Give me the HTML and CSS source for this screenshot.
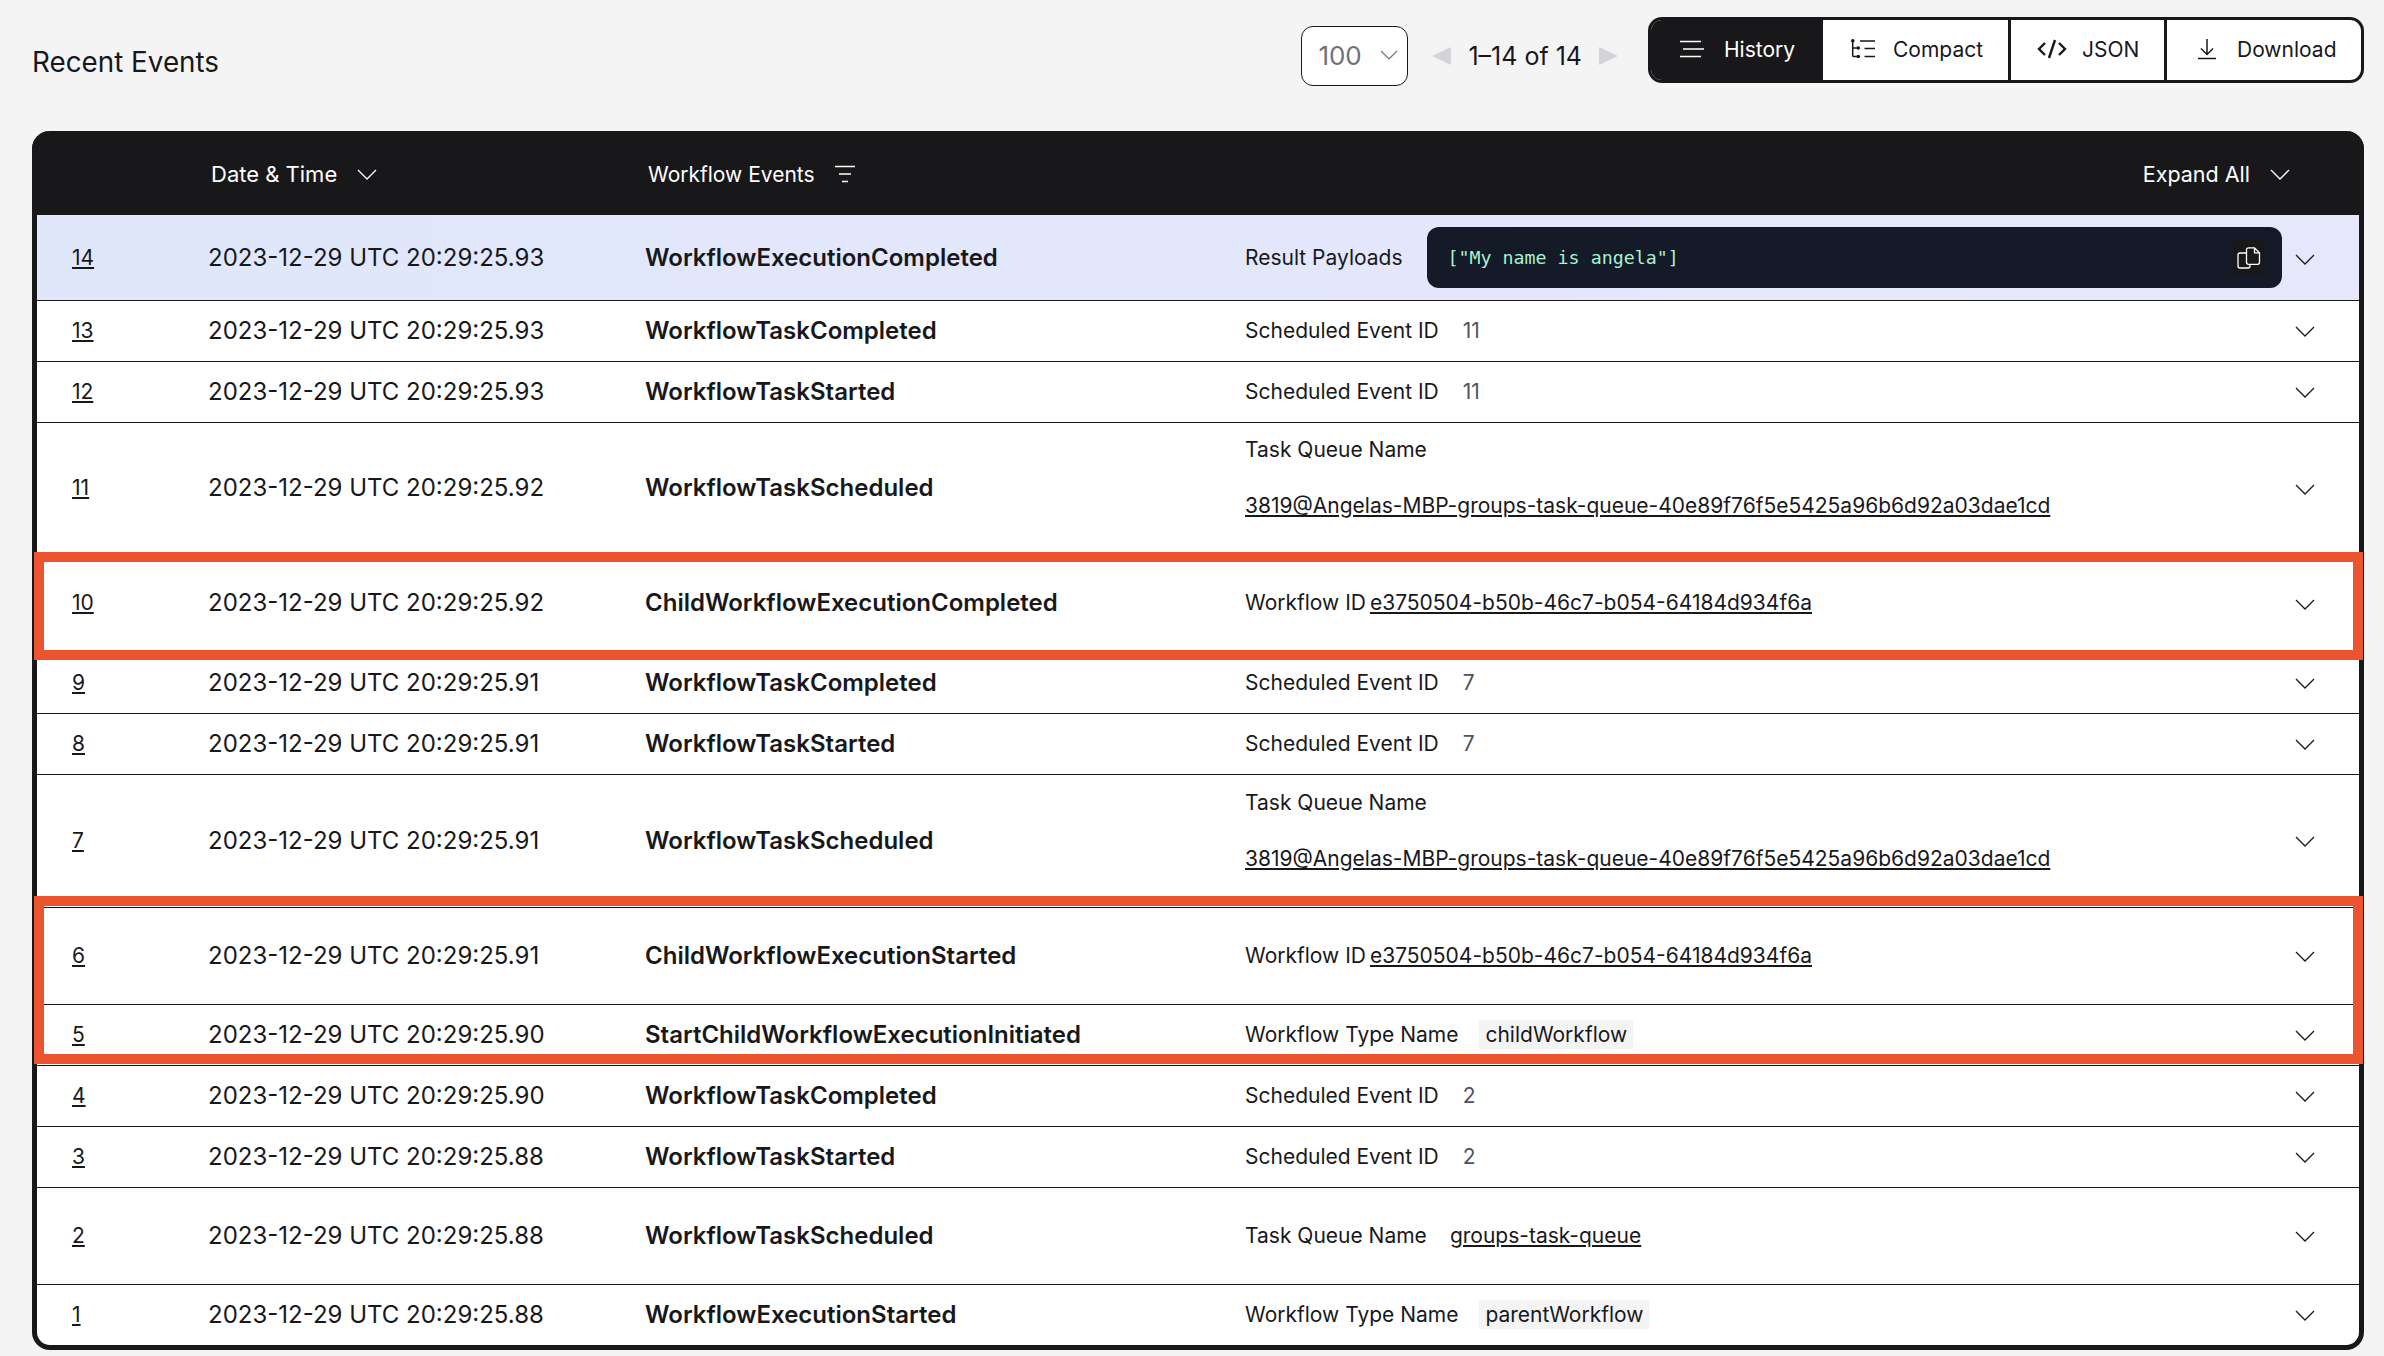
FILE: index.html
```html
<!DOCTYPE html>
<html>
  <head>
    <title>Recent Events</title>
    <link rel="stylesheet" href="styles.css">
  </head>
  <body>
    <div class="top-bar">
      <h2 class="page-title">Recent Events</h2>
      <div class="page-select"><span>100</span><svg width="20" height="12" viewBox="0 0 20 12"><path d="M2 2l8 8 8-8"/></svg></div>
      <div class="pager">
        <span class="arrow arrow-left"></span>
        <span>1–14 of 14</span>
        <span class="arrow arrow-right"></span>
      </div>
      <div class="view-tabs">
        <div class="tab tab-active">
          <svg class="thin" width="24" height="18" viewBox="0 0 24 18"><path d="M0 1.500h21M3 9h21M0 16.500h21"/></svg>
          History
        </div>
        <div class="tab tab-compact">
          <svg width="24" height="20" viewBox="0 0 24 20"><path d="M1.700 1.500v16M1.700 9h5.600M1.700 17.500h5.600M9 2h15M13.500 9.500h10.500M13.500 17.500h10.500"/><circle class="dot" cx="1.800" cy="1.800" r="1.800"/><circle class="dot" cx="7.300" cy="9" r="1.800"/><circle class="dot" cx="7.300" cy="17.500" r="1.800"/></svg>
          Compact
        </div>
        <div class="tab tab-json">
          <svg class="bold" width="30" height="20" viewBox="0 0 30 20"><path d="M8 4l-6 6 6 6M22 4l6 6-6 6M18 1l-6 18"/></svg>
          JSON
        </div>
        <div class="tab tab-download">
          <svg width="18" height="22" viewBox="0 0 18 22"><path d="M9 1v15M3 10.500l6 6 6-6M0 20.500h18"/></svg>
          Download
        </div>
      </div>
    </div>

    <div class="events-table">
      <div class="table-head">
        <div class="head-date">Date &amp; Time <svg class="chevron" width="20" height="12" viewBox="0 0 20 12"><path d="M1 1l9 9 9-9"/></svg></div>
        <div class="head-events">Workflow Events <svg class="thin" width="20" height="18" viewBox="0 0 20 18"><path d="M0 1.500h20M4 9h12M7 16.500h6"/></svg></div>
        <div class="head-expand">Expand All <svg class="chevron" width="20" height="12" viewBox="0 0 20 12"><path d="M1 1l9 9 9-9"/></svg></div>
      </div>

      <div class="row row-result">
        <a class="num">14</a>
        <div class="date">2023-12-29 UTC 20:29:25.93</div>
        <div class="event">WorkflowExecutionCompleted</div>
        <div class="detail">
          <span>Result Payloads</span>
          <div class="payload">
            <code>["My name is angela"]</code>
            <div class="copy-btn">
              <svg class="thin" width="24" height="22" viewBox="0 0 24 22"><path d="M11.500.8h6l5 5v9.500a2 2 0 0 1-2 2h-9a2 2 0 0 1-2-2V2.800a2 2 0 0 1 2-2zM17.500.8v5h5M9.500 6H3a2 2 0 0 0-2 2v11a2 2 0 0 0 2 2h8a2 2 0 0 0 2-2v-2"/></svg>
            </div>
          </div>
        </div>
        <svg class="toggle" width="20" height="12" viewBox="0 0 20 12"><path d="M1 1l9 9 9-9"/></svg>
      </div>

      <div class="row">
        <a class="num">13</a>
        <div class="date">2023-12-29 UTC 20:29:25.93</div>
        <div class="event">WorkflowTaskCompleted</div>
        <div class="detail"><span>Scheduled Event ID</span><span class="value">11</span></div>
        <svg class="toggle" width="20" height="12" viewBox="0 0 20 12"><path d="M1 1l9 9 9-9"/></svg>
      </div>

      <div class="row">
        <a class="num">12</a>
        <div class="date">2023-12-29 UTC 20:29:25.93</div>
        <div class="event">WorkflowTaskStarted</div>
        <div class="detail"><span>Scheduled Event ID</span><span class="value">11</span></div>
        <svg class="toggle" width="20" height="12" viewBox="0 0 20 12"><path d="M1 1l9 9 9-9"/></svg>
      </div>

      <div class="row row-tall">
        <a class="num">11</a>
        <div class="date">2023-12-29 UTC 20:29:25.92</div>
        <div class="event">WorkflowTaskScheduled</div>
        <div class="detail detail-stack"><span>Task Queue Name</span><a class="link">3819@Angelas-MBP-groups-task-queue-40e89f76f5e5425a96b6d92a03dae1cd</a></div>
        <svg class="toggle" width="20" height="12" viewBox="0 0 20 12"><path d="M1 1l9 9 9-9"/></svg>
      </div>

      <div class="marked marked-single">
        <div class="row row-ten">
          <a class="num">10</a>
          <div class="date">2023-12-29 UTC 20:29:25.92</div>
          <div class="event">ChildWorkflowExecutionCompleted</div>
          <div class="detail"><span>Workflow ID</span><a class="link link-near">e3750504-b50b-46c7-b054-64184d934f6a</a></div>
          <svg class="toggle" width="20" height="12" viewBox="0 0 20 12"><path d="M1 1l9 9 9-9"/></svg>
        </div>
      </div>

      <div class="row">
        <a class="num">9</a>
        <div class="date">2023-12-29 UTC 20:29:25.91</div>
        <div class="event">WorkflowTaskCompleted</div>
        <div class="detail"><span>Scheduled Event ID</span><span class="value">7</span></div>
        <svg class="toggle" width="20" height="12" viewBox="0 0 20 12"><path d="M1 1l9 9 9-9"/></svg>
      </div>

      <div class="row">
        <a class="num">8</a>
        <div class="date">2023-12-29 UTC 20:29:25.91</div>
        <div class="event">WorkflowTaskStarted</div>
        <div class="detail"><span>Scheduled Event ID</span><span class="value">7</span></div>
        <svg class="toggle" width="20" height="12" viewBox="0 0 20 12"><path d="M1 1l9 9 9-9"/></svg>
      </div>

      <div class="row row-seven">
        <a class="num">7</a>
        <div class="date">2023-12-29 UTC 20:29:25.91</div>
        <div class="event">WorkflowTaskScheduled</div>
        <div class="detail detail-stack"><span>Task Queue Name</span><a class="link">3819@Angelas-MBP-groups-task-queue-40e89f76f5e5425a96b6d92a03dae1cd</a></div>
        <svg class="toggle" width="20" height="12" viewBox="0 0 20 12"><path d="M1 1l9 9 9-9"/></svg>
      </div>

      <div class="marked marked-double">
        <div class="row row-mid">
          <a class="num">6</a>
          <div class="date">2023-12-29 UTC 20:29:25.91</div>
          <div class="event">ChildWorkflowExecutionStarted</div>
          <div class="detail"><span>Workflow ID</span><a class="link link-near">e3750504-b50b-46c7-b054-64184d934f6a</a></div>
          <svg class="toggle" width="20" height="12" viewBox="0 0 20 12"><path d="M1 1l9 9 9-9"/></svg>
        </div>
        <div class="row">
          <a class="num">5</a>
          <div class="date">2023-12-29 UTC 20:29:25.90</div>
          <div class="event">StartChildWorkflowExecutionInitiated</div>
          <div class="detail"><span>Workflow Type Name</span><span class="chip">childWorkflow</span></div>
          <svg class="toggle" width="20" height="12" viewBox="0 0 20 12"><path d="M1 1l9 9 9-9"/></svg>
        </div>
      </div>

      <div class="row">
        <a class="num">4</a>
        <div class="date">2023-12-29 UTC 20:29:25.90</div>
        <div class="event">WorkflowTaskCompleted</div>
        <div class="detail"><span>Scheduled Event ID</span><span class="value">2</span></div>
        <svg class="toggle" width="20" height="12" viewBox="0 0 20 12"><path d="M1 1l9 9 9-9"/></svg>
      </div>

      <div class="row">
        <a class="num">3</a>
        <div class="date">2023-12-29 UTC 20:29:25.88</div>
        <div class="event">WorkflowTaskStarted</div>
        <div class="detail"><span>Scheduled Event ID</span><span class="value">2</span></div>
        <svg class="toggle" width="20" height="12" viewBox="0 0 20 12"><path d="M1 1l9 9 9-9"/></svg>
      </div>

      <div class="row row-mid">
        <a class="num">2</a>
        <div class="date">2023-12-29 UTC 20:29:25.88</div>
        <div class="event">WorkflowTaskScheduled</div>
        <div class="detail"><span>Task Queue Name</span><a class="link link-queue">groups-task-queue</a></div>
        <svg class="toggle" width="20" height="12" viewBox="0 0 20 12"><path d="M1 1l9 9 9-9"/></svg>
      </div>

      <div class="row row-last">
        <a class="num">1</a>
        <div class="date">2023-12-29 UTC 20:29:25.88</div>
        <div class="event">WorkflowExecutionStarted</div>
        <div class="detail"><span>Workflow Type Name</span><span class="chip">parentWorkflow</span></div>
        <svg class="toggle" width="20" height="12" viewBox="0 0 20 12"><path d="M1 1l9 9 9-9"/></svg>
      </div>
    </div>
  </body>
</html>
```

FILE: styles.css
```css
* {
  box-sizing: border-box;
}

body {
  margin: 0;
  padding: 17px 20px 0 32px;
  background-color: #f4f4f5;
  color: #18181b;
  font-family: Inter, "Liberation Sans", sans-serif;
  font-size: 21px;
}

svg {
  fill: none;
  stroke: currentColor;
  stroke-width: 1.500;
  flex: none;
}

svg.thin {
  stroke-width: 1.300;
}

svg.bold {
  stroke-width: 2.400;
}

svg .dot {
  fill: currentColor;
  stroke: none;
}

/* Top bar */
.top-bar {
  display: flex;
  align-items: flex-start;
  height: 114px;
}

.page-title {
  margin: 27px auto 0 0;
  font-size: 27.800px;
  font-weight: 400;
  line-height: 36px;
}

.page-select {
  display: flex;
  align-items: center;
  justify-content: space-between;
  width: 107px;
  height: 60px;
  margin-top: 9px;
  padding: 0 8px 2px 16px;
  background-color: #ffffff;
  border: 1px solid #18181b;
  border-radius: 12px;
  color: #71717a;
  font-size: 26px;
}

.page-select svg {
  stroke-width: 1.200;
}

.pager {
  display: flex;
  align-items: center;
  gap: 17px;
  height: 60px;
  margin: 9px 30px 0 24px;
  font-size: 25px;
}

.arrow {
  width: 0;
  height: 0;
  border-top: 9px solid transparent;
  border-bottom: 9px solid transparent;
}

.arrow-left {
  border-right: 19px solid #d4d4d8;
}

.arrow-right {
  border-left: 19px solid #d4d4d8;
}

.view-tabs {
  display: flex;
  flex: none;
  height: 66px;
  background-color: #ffffff;
  border: 3px solid #18181b;
  border-radius: 14px;
  overflow: hidden;
}

.tab {
  display: flex;
  align-items: center;
  flex: none;
  padding-bottom: 2px;
  border-left: 3px solid #18181b;
}

.tab-active {
  gap: 20px;
  width: 169px;
  padding-left: 29px;
  background-color: #18181b;
  border-left: 0;
  color: #ffffff;
}

.tab-compact {
  gap: 18px;
  width: 188px;
  padding-left: 28px;
}

.tab-json {
  gap: 15px;
  width: 156px;
  padding-left: 26px;
}

.tab-download {
  gap: 21px;
  width: 197px;
  padding-left: 31px;
}

/* Table */
.events-table {
  height: 1219px;
  background-color: #ffffff;
  border: 5px solid #18181b;
  border-top: 0;
  border-radius: 18px;
  font-size: 24px;
}

.table-head {
  display: flex;
  align-items: center;
  height: 84px;
  margin: 0 -5px;
  padding-left: 179px;
  padding-top: 2px;
  background-color: #18181b;
  border-radius: 18px 18px 0 0;
  color: #ffffff;
  font-size: 21px;
}

.table-head .chevron {
  stroke-width: 1.300;
  margin-top: 2px;
}

.head-date,
.head-events,
.head-expand {
  display: flex;
  align-items: center;
}

.head-date {
  gap: 20px;
  width: 437px;
  font-size: 22px;
}

.head-events {
  gap: 20px;
}

.head-expand {
  gap: 20px;
  margin-left: auto;
  margin-right: 74px;
  font-size: 21.500px;
}

.row {
  display: flex;
  align-items: center;
  height: 61px;
  padding-left: 35px;
  padding-bottom: 2px;
  border-bottom: 1px solid #18181b;
}

.row-result {
  height: 86px;
  padding-bottom: 0;
  background: linear-gradient(90deg, #e0e7fb, #e7e7fb);
}

.row-tall {
  height: 132px;
}

.row-seven {
  height: 133px;
}

.row-mid {
  height: 97px;
}

.row-ten {
  height: 98px;
}

.row-last {
  height: 60px;
  border-bottom: 0;
}

.num {
  width: 136px;
  text-decoration: underline;
  font-size: 21px;
}

.date {
  width: 437px;
}

.event {
  width: 600px;
  font-weight: 600;
}

.detail {
  display: flex;
  align-items: center;
  flex: 1;
  min-width: 0;
  font-size: 21px;
  white-space: nowrap;
}

.detail-stack {
  flex-direction: column;
  align-items: flex-start;
  gap: 31px;
  padding-bottom: 20px;
}

.value {
  margin-left: 24px;
  color: #52525b;
}

.link {
  text-decoration: underline;
}

.link-near {
  margin-left: 4px;
}

.link-queue {
  margin-left: 23px;
}

.chip {
  margin-left: 21px;
  padding: 2px 6px;
  background-color: #f4f4f5;
}

.payload {
  display: flex;
  align-items: center;
  justify-content: space-between;
  width: 857px;
  height: 61px;
  margin-left: 24px;
  padding: 0 17px 0 21px;
  background-color: #141a27;
  border-radius: 12px;
  color: #ffffff;
}

.payload code {
  color: #a7f3d0;
  font-family: "DejaVu Sans Mono", monospace;
  font-size: 18.300px;
}

.copy-btn {
  display: flex;
  align-items: center;
  justify-content: center;
  width: 33px;
  height: 35px;
  background-color: #18181b;
  border-radius: 4px;
}

.toggle {
  margin: 4px 44px 0 13px;
  stroke-width: 1.300;
}

/* Orange outlines over the rows */
.marked {
  position: relative;
}

.marked::after {
  content: "";
  position: absolute;
  left: -3px;
  right: -4px;
  border: 10px solid #ec542f;
  pointer-events: none;
}

.marked-single::after {
  top: -3px;
  bottom: -7px;
}

.marked-double::after {
  top: -12px;
  bottom: 2px;
}
```
